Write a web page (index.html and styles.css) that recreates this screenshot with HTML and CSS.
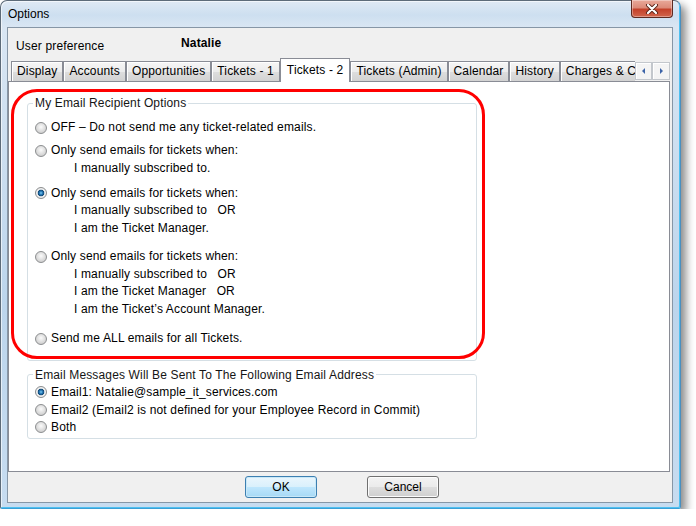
FILE: index.html
```html
<!DOCTYPE html>
<html>
<head>
    <meta http-equiv="Content-Type" content="text/html; charset=utf-8">
    <title>Options</title>
    <link rel="stylesheet" href="styles.css">
</head>
<body>
    <div class="window">
        <div class="titlebar">
            <span class="title">Options</span>
            <div class="close">
                <svg width="14" height="10" viewBox="0 0 14 10">
                    <path d="M3 1 L11 9 M11 1 L3 9" stroke="#5a2418" stroke-width="4" stroke-linecap="round"/>
                    <path d="M3 1 L11 9 M11 1 L3 9" stroke="#fff" stroke-width="2.2" stroke-linecap="round"/>
                </svg>
            </div>
        </div>
        <div class="client">
            <!-- user -->
            <div class="userRow">
                <span class="userLabel">User preference</span>
                <span class="userName">Natalie</span>
            </div>
            <!-- tabs -->
            <div class="tabbar">
                <div class="tabs">
                    <div class="tab">Display</div>
                    <div class="tab">Accounts</div>
                    <div class="tab">Opportunities</div>
                    <div class="tab">Tickets - 1</div>
                    <div class="tab tab_on">Tickets - 2</div>
                    <div class="tab">Tickets (Admin)</div>
                    <div class="tab">Calendar</div>
                    <div class="tab">History</div>
                    <div class="tab">Charges &amp; Commissions</div>
                </div>
                <div class="scrollBtns">
                    <div class="scrollBtn"><span class="arrow arrow_left"></span></div>
                    <div class="scrollBtn"><span class="arrow arrow_right"></span></div>
                </div>
            </div>
            <!-- panel -->
            <div class="panel">
                <div class="highlight"></div>
                <fieldset class="group">
                    <legend>My Email Recipient Options</legend>
                    <div class="opt">
                        <div class="optHead"><span class="radio"></span>OFF – Do not send me any ticket-related emails.</div>
                    </div>
                    <div class="opt gap1">
                        <div class="optHead"><span class="radio"></span>Only send emails for tickets when:</div>
                        <div class="sub">I manually subscribed to.</div>
                    </div>
                    <div class="opt gap2">
                        <div class="optHead"><span class="radio radio_on"></span>Only send emails for tickets when:</div>
                        <div class="sub">I manually subscribed to &nbsp; OR</div>
                        <div class="sub">I am the Ticket Manager.</div>
                    </div>
                    <div class="opt gap3">
                        <div class="optHead"><span class="radio"></span>Only send emails for tickets when:</div>
                        <div class="sub">I manually subscribed to &nbsp; OR</div>
                        <div class="sub">I am the Ticket Manager &nbsp; OR</div>
                        <div class="sub">I am the Ticket’s Account Manager.</div>
                    </div>
                    <div class="opt gap4">
                        <div class="optHead"><span class="radio"></span>Send me ALL emails for all Tickets.</div>
                    </div>
                </fieldset>
                <fieldset class="group group_mail">
                    <legend>Email Messages Will Be Sent To The Following Email Address</legend>
                    <div class="optHead"><span class="radio radio_on"></span>Email1: Natalie@sample_it_services.com</div>
                    <div class="optHead"><span class="radio"></span>Email2 (Email2 is not defined for your Employee Record in Commit)</div>
                    <div class="optHead"><span class="radio"></span>Both</div>
                </fieldset>
            </div>
            <!-- buttons -->
            <div class="buttons">
                <button class="btn btn_default">OK</button>
                <button class="btn">Cancel</button>
            </div>
        </div>
    </div>
</body>
</html>
```

FILE: styles.css
```css
body,div,span,fieldset,legend,button{margin:0;padding:0;}
body{font-size:12px; font-family:"Liberation Sans", Arial, sans-serif; color:#000; background:#fff; letter-spacing:0.15px;}

.window{ width:681px; height:509px; box-sizing:border-box; padding:0 7px 5px 6px;
    display:flex; flex-direction:column;
    border:1px solid #5d6b79; border-color:#5d6b79 #4a8fbf #3a9fd6 #5d6b79; border-radius:7px 7px 2px 2px;
    background:linear-gradient(180deg, #dfe9f4 0, #cddff0 14px, #d9e6f3 26px, #bcd5ec 60%, #c7dcf0 100%);
    box-shadow:inset -1px -1px 0 #4fc0f0, inset 1px 1px 0 rgba(255,255,255,.6), 5px 5px 9px rgba(0,0,0,.45);}

.titlebar{ height:26px; display:flex; justify-content:space-between; align-items:flex-start;}
.title{ align-self:center; padding-left:1px; line-height:14px; color:#000; letter-spacing:0;}
.close{ width:42px; height:18px; margin-top:-1px; box-sizing:border-box; display:flex; align-items:center; justify-content:center;
    border:1px solid #5e2a20; border-top:none; border-radius:0 0 4px 4px;
    background:linear-gradient(180deg, #e9a99a 0, #dc8a78 45%, #c4412a 55%, #d1654c 100%);
    box-shadow:inset 0 0 0 1px rgba(255,255,255,.35);}

.client{ flex:1; display:flex; flex-direction:column; background:#f0f0f0; border:1px solid #8696a6;}

.userRow{ height:30px; display:flex; padding-left:8px;}
.userLabel{ width:165px; margin-top:11px; line-height:14px;}
.userName{ margin-top:8px; line-height:14px; font-weight:bold;}

.tabbar{ height:23px; display:flex; padding-left:3px; margin-right:2px;}
.tabs{ flex:1; min-width:0; height:24px; margin-bottom:-1px; display:flex; align-items:flex-start; overflow:hidden; position:relative; z-index:1;}
.tab{ flex-shrink:0; height:20px; margin-top:3px; box-sizing:border-box; padding:0 5px; line-height:19px; white-space:nowrap;
    border:1px solid #898c95; border-bottom:none;
    background:linear-gradient(180deg, #f6f6f6 0, #ececec 50%, #dedede 51%, #d2d2d2 100%);
    box-shadow:inset 1px 1px 0 #fff;}
.tab_on{ height:24px; margin-top:0; padding:4px 6px 0; line-height:14px; background:#fff; box-shadow:none;}
.scrollBtns{ display:flex; margin-top:4px; height:18px;}
.scrollBtn{ width:17px; height:18px; box-sizing:border-box; border:1px solid #c3c7cc; background:#f4f4f4;
    box-shadow:inset 1px 1px 0 #fff; display:flex; align-items:center; justify-content:center;}
.scrollBtn + .scrollBtn{ width:18px;}
.arrow{ width:0; height:0; border-top:3px solid transparent; border-bottom:3px solid transparent;}
.arrow_left{ border-right:3px solid #3d64a8;}
.arrow_right{ border-left:3px solid #3d64a8;}

.panel{ flex:1; margin-right:2px; position:relative; background:#fff; border:1px solid #898c95;
    padding:14px 0 0 18px;}
.highlight{ position:absolute; left:2px; top:7px; width:474px; height:270px; box-sizing:border-box;
    border:3px solid #f00; border-radius:26px; pointer-events:none;}

.group{ width:450px; box-sizing:border-box; margin:0; padding:9px 10px 12px 5px; border:1px solid #d5dfe5; border-radius:3px;}
.group legend{ padding:0 2px; line-height:14px; color:#151515;}
.group_mail{ margin-top:7px; padding:2px 10px 2px 5px;}

.opt{ line-height:17.5px;}
.gap1{ margin-top:5.5px;}
.gap2{ margin-top:7.5px;}
.gap3{ margin-top:11px;}
.gap4{ margin-top:12px;}
.optHead{ display:flex; align-items:center; height:17.5px; white-space:nowrap;}
.sub{ padding-left:41px; height:17.5px; white-space:nowrap;}

.radio{ width:12px; height:12px; margin:0 4px 0 2px; flex-shrink:0; box-sizing:border-box; border-radius:50%;
    border:1px solid #8c8e90;
    background:radial-gradient(circle at 50% 40%, #fbfbfb 0, #e4e4e4 40%, #c2c2c2 100%);}
.radio_on{ background:radial-gradient(circle at 50% 50%, #7fd0f5 0, #2a7bb8 1.6px, #0f4775 3px, #dfe3e6 3.6px, #f4f4f4 4.3px, #c8c8c8 100%);}

.buttons{ height:30px; display:flex; align-items:center; justify-content:center; gap:50px; padding-left:4px;}
.btn{ width:72px; height:22px; font-family:"Liberation Sans", Arial, sans-serif; font-size:12px; color:#000;
    border:1px solid #707070; border-radius:3px;
    background:linear-gradient(180deg, #f3f3f3 0, #ebebeb 50%, #dddddd 51%, #cfcfcf 100%);
    box-shadow:inset 0 0 0 1px #fcfcfc;}
.btn_default{ border-color:#3c7fb1;
    background:linear-gradient(180deg, #eaf6fd 0, #d9f0fc 50%, #bee6fd 51%, #a7d9f5 100%);
    box-shadow:inset 0 0 0 1px #c8e8f8;}
```
